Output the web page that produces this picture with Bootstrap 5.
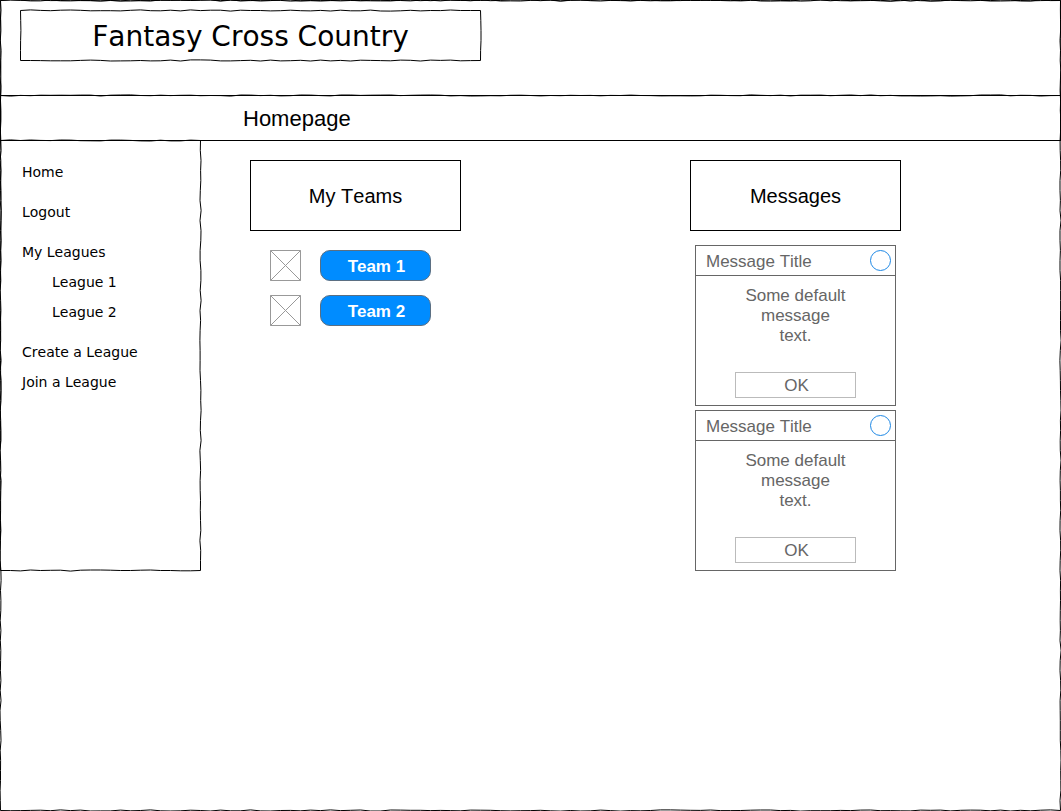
<!DOCTYPE html>
<html lang="en">
<head>
<meta charset="utf-8">
<meta name="viewport" content="width=device-width, initial-scale=1">
<title>Fantasy Cross Country</title>
<link href="https://cdn.jsdelivr.net/npm/bootstrap@5.3.0/dist/css/bootstrap.min.css" rel="stylesheet">
<style>
  body { font-family: "Liberation Sans", Arial, sans-serif; font-kerning: none; color: #000; background: #fff; }
  .sketch { position: relative; }
  .sketch-line { position: absolute; top: 0; left: 0; pointer-events: none; }
  .sketch-line path { fill: none; stroke: #000; stroke-width: 1; }
  .site-header { height: 95px; padding: 10px 20px; }
  .site-title { width: 461px; max-width: 100%; height: 51px; padding-top: 3px; font: 28px/32px "DejaVu Sans", Verdana, sans-serif; font-kerning: none; }
  .page-bar { min-height: 46px; border: 1px solid #000; padding: 2px 0 0 242px; }
  .page-bar h2 { font-size: 22px; line-height: 26px; }
  .side-nav { width: 201px; height: 430px; padding: 21px 20px 20px 22px; font: 14px/20px "DejaVu Sans", Verdana, sans-serif; font-kerning: none; }
  .side-nav a { color: #000; text-decoration: none; }
  .side-nav .stack { display: grid; gap: 10px; }
  .side-nav .stack .stack { padding-left: 30px; }
  .side-nav .groups { display: grid; gap: 20px; }
  .panels { display: grid; grid-template-columns: 440px minmax(0, 1fr); padding: 19px 0 0 49px; }
  .panel-title { width: 211px; height: 71px; border: 1px solid #000; font-size: 20px; line-height: 24px; }
  .team-list { padding: 19px 0 0 20px; gap: 14px; }
  .team-row { gap: 19px; }
  .team-btn { width: 111px; height: 31px; padding: 2px 0 0 2px; border: 1px solid #5b6f82; border-radius: 10px; background: #008cff; color: #fff; font-size: 17px; font-weight: 700; line-height: 20px; }
  .team-btn:hover { background: #0078db; color: #fff; }
  .message-list { padding: 14px 0 0 5px; gap: 4px; }
  .message-box { width: 201px; padding-bottom: 7px; border: 1px solid #666; border-radius: 0; color: #666; font-size: 17px; line-height: 20px; }
  .message-head { height: 30px; padding: 0 4px 0 10px; border-bottom: 1px solid #666; }
  .message-head h3 { padding-top: 2px; font-size: 17px; line-height: 20px; }
  .dot-btn { width: 21px; height: 21px; padding: 0; border: 1px solid #1e88e5; border-radius: 50%; background: #fff; }
  .message-text { width: 121px; height: 96px; padding: 10px 8px 0; }
  .ok-btn { width: 121px; height: 26px; padding: 2px 0 0 2px; border: 1px solid #bbb; border-radius: 0; color: #666; font-size: 17px; line-height: 20px; }
  @media (max-width: 900px) { .panels { grid-template-columns: minmax(0, 1fr); } }
</style>
</head>
<body>
<div class="sketch d-flex flex-column min-vh-100 overflow-hidden">
  <header class="site-header sketch">
    <h1 class="site-title sketch d-flex align-items-center justify-content-center mb-0">Fantasy Cross Country</h1>
  </header>
  <div class="page-bar d-flex align-items-center">
    <h2 class="mb-0 fw-normal">Homepage</h2>
  </div>
  <div class="d-flex flex-grow-1 align-items-start">
    <nav class="side-nav sketch flex-shrink-0" aria-label="Main">
      <ul class="groups list-unstyled mb-0">
        <li><a href="#">Home</a></li>
        <li><a href="#">Logout</a></li>
        <li class="stack"><a href="#">My Leagues</a>
          <ul class="stack list-unstyled mb-0">
            <li><a href="#">League 1</a></li>
            <li><a href="#">League 2</a></li>
          </ul>
        </li>
        <li class="stack"><a href="#">Create a League</a><a href="#">Join a League</a></li>
      </ul>
    </nav>
    <main class="panels flex-grow-1">
      <section>
        <h2 class="panel-title d-flex align-items-center justify-content-center fw-normal mb-0">My Teams</h2>
        <div class="team-list d-flex flex-column">
          <div class="team-row d-flex">
            <svg width="31" height="31" fill="none" stroke="#999" aria-hidden="true"><path d="M.5 .5h30v30h-30zl30 30M30.5 .5l-30 30"/></svg>
            <button class="btn team-btn" type="button">Team 1</button>
          </div>
          <div class="team-row d-flex">
            <svg width="31" height="31" fill="none" stroke="#999" aria-hidden="true"><path d="M.5 .5h30v30h-30zl30 30M30.5 .5l-30 30"/></svg>
            <button class="btn team-btn" type="button">Team 2</button>
          </div>
        </div>
      </section>
      <section>
        <h2 class="panel-title d-flex align-items-center justify-content-center fw-normal mb-0">Messages</h2>
        <div class="message-list d-flex flex-column">
          <article class="message-box">
            <div class="message-head d-flex align-items-center justify-content-between">
              <h3 class="mb-0 fw-normal">Message Title</h3>
              <button class="dot-btn" type="button" aria-label="Close"></button>
            </div>
            <p class="message-text text-center mx-auto mb-0">Some default message text.</p>
            <button class="btn ok-btn d-block mx-auto" type="button">OK</button>
          </article>
          <article class="message-box">
            <div class="message-head d-flex align-items-center justify-content-between">
              <h3 class="mb-0 fw-normal">Message Title</h3>
              <button class="dot-btn" type="button" aria-label="Close"></button>
            </div>
            <p class="message-text text-center mx-auto mb-0">Some default message text.</p>
            <button class="btn ok-btn d-block mx-auto" type="button">OK</button>
          </article>
        </div>
      </section>
    </main>
  </div>
</div>
<script src="https://cdn.jsdelivr.net/npm/bootstrap@5.3.0/dist/js/bootstrap.bundle.min.js"></script>
<script>
  // Hand-drawn outlines: each edge wanders slightly, one step every ten pixels.
  function drawOutline(box, index) {
    const old = box.querySelector(':scope > .sketch-line');
    if (old) old.remove();
    const w = box.offsetWidth - 0.5, h = box.offsetHeight - (box.matches('header') ? -0.5 : 0.5);
    let seed = 17 + index * 31;
    const wobble = () => { seed = (seed * 16807) % 2147483647; return seed / 2147483647 * 1.2 - 0.6; };
    function edge(x1, y1, x2, y2) {
      const length = Math.hypot(x2 - x1, y2 - y1), steps = Math.max(1, Math.round(length / 10));
      const across = y1 === y2;
      let d = `M${x1} ${y1}`;
      for (let i = 1; i <= steps; i++) {
        const t = i / steps, o = i === steps ? 0 : wobble();
        const x = x1 + (x2 - x1) * t + (across ? 0 : o), y = y1 + (y2 - y1) * t + (across ? o : 0);
        d += `L${x.toFixed(1)} ${y.toFixed(1)}`;
      }
      return d;
    }
    const top = box.matches('nav') ? -0.5 : 0.5;
    const d = edge(0.5, top, w, top) + edge(w, top, w, h) + edge(0.5, h, w, h) + edge(0.5, top, 0.5, h);
    box.insertAdjacentHTML('beforeend',
      `<svg class="sketch-line" width="${box.offsetWidth}" height="${box.offsetHeight}" overflow="visible" aria-hidden="true"><path d="${d}"/></svg>`);
  }
  const drawAll = () => document.querySelectorAll('.sketch').forEach(drawOutline);
  drawAll();
  addEventListener('resize', drawAll);
</script>
</body>
</html>
